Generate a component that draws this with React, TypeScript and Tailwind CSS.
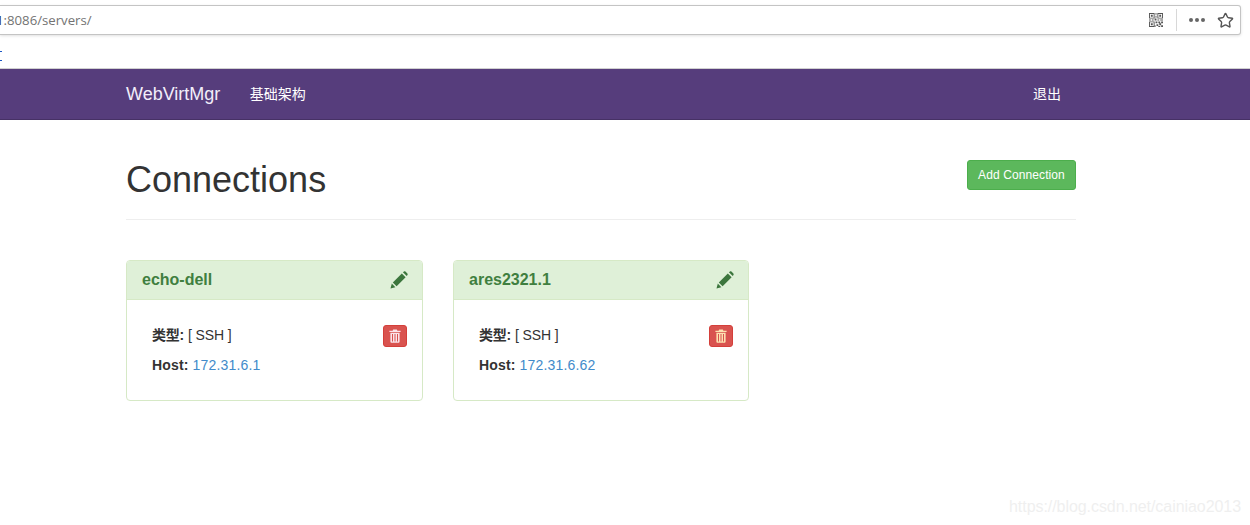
import React from "react";
import { Star } from "lucide-react";

const sans = "font-['Liberation_Sans','Noto_Sans_CJK_SC',Arial,sans-serif]";

function Pencil() {
  return (
    <svg width="18" height="18" viewBox="0 0 18 18" className="text-[#3c763d]" fill="currentColor">
      <path d="M0.5 17.5 L1.8 12.6 L5.4 16.2 Z" />
      <path d="M2.8 11.4 L11.8 2.4 L15.6 6.2 L6.6 15.2 Z" />
      <path d="M12.9 1.3 L14 0.5 C14.5 0.2 15 0.2 15.4 0.6 L17.4 2.6 C17.8 3 17.8 3.5 17.5 4 L16.7 5.1 Z" />
    </svg>
  );
}

function Trash({ color }: { color: string }) {
  return (
    <svg width="12" height="14" viewBox="0 0 12 14" fill={color}>
      <path d="M4.2 0.5 H7.8 L8.4 1.8 H11.6 V3 H0.4 V1.8 H3.6 Z" />
      <path fillRule="evenodd" d="M1.4 3.8 H10.6 V12.4 C10.6 13.2 10.1 13.7 9.4 13.7 H2.6 C1.9 13.7 1.4 13.2 1.4 12.4 Z M3 5 V12.5 H4 V5 Z M5.5 5 V12.5 H6.5 V5 Z M8 5 V12.5 H9 V5 Z" />
    </svg>
  );
}

function Qr() {
  return (
    <svg width="14" height="14" viewBox="0 0 15 15" fill="#555">
      <path fillRule="evenodd" d="M0 0H6V6H0Z M1 1V5H5V1Z M9 0H15V6H9Z M10 1V5H14V1Z M0 9H6V15H0Z M1 10V14H5V10Z" />
      <path d="M2 2H4V4H2Z M11 2H13V4H11Z M2 11H4V13H2Z M7 0H8V2H7Z M7 3H8V5H7Z M0 7H2V8H0Z M3 7H5V8H3Z M6 6H8V8H6Z M9 7H11V8H9Z M12 7H15V8H12Z M7 9H9V11H7Z M10 9H12V11H10Z M13 9H15V11H13Z M8 12H10V14H8Z M11 11H13V13H11Z M13 13H15V15H13Z M10 14H12V15H10Z M6 13H7V15H6Z" />
    </svg>
  );
}

function Card({ name, ip, trash, width }: { name: string; ip: string; trash: string; width: string }) {
  return (
    <div className={`${width} h-[141px] rounded-[4px] border border-[#d6e9c6] bg-white overflow-hidden`}>
      <div className="h-[39px] bg-[#dff0d8] border-b border-[#d6e9c6] pl-[15px] pr-[14px] flex items-center justify-between">
        <span className="text-[16px] font-bold text-[#3f7f40]">{name}</span>
        <Pencil />
      </div>
      <div className="pl-[25px] pr-[15px] pt-[25px] flex justify-between items-start">
        <div className="text-[14px] leading-[20px] text-[#333] flex flex-col gap-[10px]">
          <div><b className="tracking-[-0.2px]">类型:</b> <span className="tracking-[-0.1px]">[ SSH ]</span></div>
          <div><b className="tracking-[0.15px]">Host:</b> <span className="text-[#428bca] tracking-[0.2px]">{ip}</span></div>
        </div>
        <div className="w-[24px] h-[22px] rounded-[3px] bg-[#d9534f] border border-[#d43f3a] flex items-center justify-center">
          <Trash color={trash} />
        </div>
      </div>
    </div>
  );
}

export default function App() {
  return (
    <div className={`relative w-[1250px] h-[525px] overflow-hidden bg-white ${sans}`}>
      <div className="h-[37px] pt-[5px] pr-[9px] bg-white">
        <div className="h-[30px] bg-white border-y border-r border-[#c4c4c4] rounded-r-[3px] shadow-[0_1px_3px_rgba(0,0,0,0.12)] flex items-center pr-[6px]">
          <span className="-ml-[4px] pt-[2px] text-[13.2px] text-[#737373] font-['Open_Sans',sans-serif]"><span className="text-[#222]">1</span>:8086/servers/</span>
          <div className="ml-auto flex items-center">
            <Qr />
            <div className="w-px h-[22px] bg-[#d8d8d8] ml-[13px] mr-[12px]" />
            <div className="flex gap-[2px] mr-[12px]">
              <span className="w-[4px] h-[4px] rounded-full bg-[#666]" />
              <span className="w-[4px] h-[4px] rounded-full bg-[#666]" />
              <span className="w-[4px] h-[4px] rounded-full bg-[#666]" />
            </div>
            <Star size={17} color="#555" strokeWidth={2} />
          </div>
        </div>
      </div>

      <div className="h-[31px] flex items-center">
        <span className="w-[2px] h-[10px] border-y border-[#1a56c4] mt-[6px]" />
      </div>

      <nav className="h-[52px] bg-[#563d7c] border-t border-[#d0d0d0] border-b-[#463165] border-b text-white">
        <div className="w-[950px] ml-[126px] h-full flex items-center">
          <span className="text-[18px] text-[#f2eefa]">WebVirtMgr</span>
          <span className="ml-[29.5px] text-[14px]">基础架构</span>
          <span className="ml-auto mr-[15px] text-[14px]">退出</span>
        </div>
      </nav>

      <main className="w-[950px] ml-[126px]">
        <div className="h-[100px] border-b border-[#eee] flex justify-between items-start">
          <h1 className="mt-[40px] text-[36px] leading-[40px] text-[#333]">Connections</h1>
          <button className="mt-[40px] w-[109px] h-[30px] rounded-[3px] bg-[#5cb85c] border border-[#4cae4c] text-white text-[12px] tracking-[0.1px]">Add Connection</button>
        </div>
        <div className="mt-[40px] flex gap-[30px]">
          <Card name="echo-dell" ip="172.31.6.1" trash="#fbe3ea" width="w-[297px]" />
          <Card name="ares2321.1" ip="172.31.6.62" trash="#fde2b0" width="w-[296px]" />
        </div>
      </main>

      <div className="absolute right-[9px] bottom-[9px] text-[16px] leading-[18px] tracking-[-0.06px] text-[#efefef]">https://blog.csdn.net/cainiao2013</div>
    </div>
  );
}
